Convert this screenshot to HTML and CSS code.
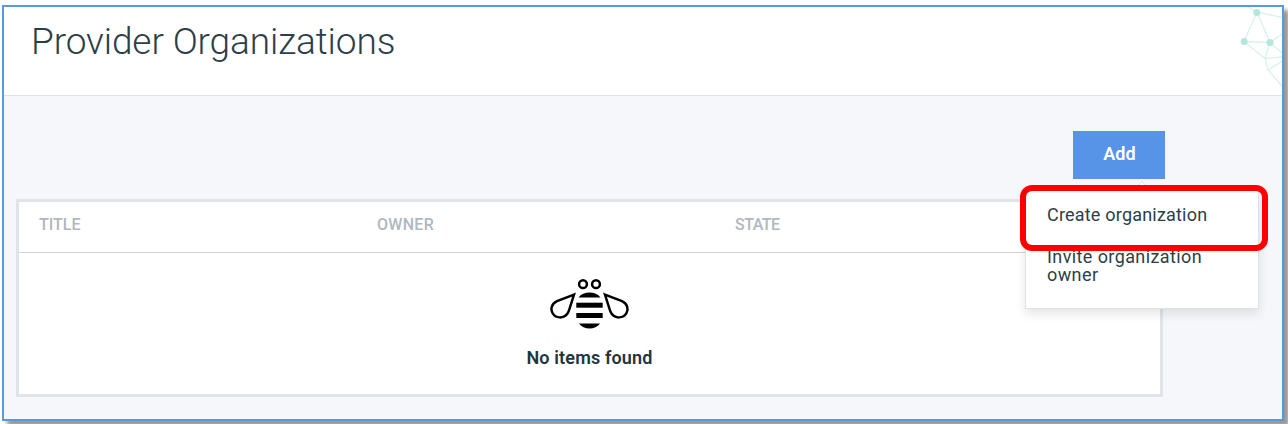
FILE: index.html
```html
<!DOCTYPE html>
<html lang="en">
<head>
<meta charset="utf-8">
<title>Provider Organizations</title>
<link rel="stylesheet" href="styles.css">
</head>
<body>
<div class="window">
  <header class="header">
    <h1 class="title">Provider Organizations</h1>
    <svg class="network" width="42" height="88" viewBox="1240 7 42 88" fill="none">
      <g stroke="#d9f2ed" stroke-width="1.3">
        <path d="M1257 12L1244 41.500M1257 12L1270 42.500M1257 12L1282 17.500M1257 12L1248 7M1244 41.500L1270 42.500L1282 34M1244 41.500L1265 58.500L1282 57M1270 42.500L1265 58.500L1268 70L1282 86M1268 70L1282 61M1270 42.500L1282 53"/>
      </g>
      <g fill="#b3e6dc"><circle cx="1256.800" cy="12.500" r="3.500"/><circle cx="1244.200" cy="41.500" r="3.500"/><circle cx="1270" cy="42.500" r="3.500"/></g>
    </svg>
  </header>
  <main class="content">
    <div class="toolbar">
      <button class="add">Add</button>
      <div class="menu">
        <div class="item">Create organization</div>
        <div class="item second">Invite organization owner</div>
      </div>
      <div class="highlight"></div>
    </div>
    <section class="table">
      <div class="head">
        <span>TITLE</span><span class="owner">OWNER</span><span class="state">STATE</span>
      </div>
      <div class="empty">
        <svg class="bee" width="80" height="52" viewBox="550 277 80 52" fill="none">
          <g stroke="#000" stroke-width="2.500">
            <circle cx="583" cy="284.200" r="3.900"/><circle cx="596" cy="284.200" r="3.900"/>
            <path d="M574 294.700L557 301.200C551.500 303.800 550.300 309 552.500 313C555.500 318.500 563.500 319 567.500 313.500C568.500 312 569 310.500 569.300 309.500Z"/>
            <path d="M605 294.700L622 301.200C627.500 303.800 628.700 309 626.500 313C623.500 318.500 615.500 319 611.500 313.500C610.500 312 610 310.500 609.700 309.500Z"/>
          </g>
          <g fill="#000"><path d="M578.500 297.500C583 290.700 596 290.700 600.500 297.500Z"/><rect x="576.300" y="302.700" width="26.400" height="5"/><rect x="576.300" y="313" width="26.400" height="5"/><path d="M579 323.500H600C595.500 330.300 583.500 330.300 579 323.500Z"/></g>
        </svg>
        <p class="message">No items found</p>
      </div>
    </section>
  </main>
</div>
</body>
</html>
```
FILE: styles.css
```css
* { box-sizing: border-box; }
body { margin: 0; height: 424px; padding: 5px 0 0 2px; overflow: hidden; background: #fff; font-family: Roboto, "Liberation Sans", sans-serif; color: #2c3e49; }
.window { width: 1282px; height: 416px; border: 2px solid #5b9bd5; background: #f5f7fb; box-shadow: 5px 5px 4px #989898; }
.header { height: 89px; display: flex; justify-content: space-between; background: #fff; border-bottom: 1px solid #dfe3e6; }
.title { margin: 0; padding: 11px 0 0 27px; font-size: 37px; line-height: 48px; font-weight: 300; letter-spacing: -.11px; }
.network { display: block; }
.content { padding: 35px 0 0 12px; }
.toolbar { position: relative; width: 1149px; height: 68px; display: flex; justify-content: flex-end; align-items: flex-start; }
.add { width: 92px; height: 48px; padding: 0 0 3px 1px; border: 0; background: #5794e8; color: #fff; font: 600 18px Roboto, sans-serif; }
.menu { position: absolute; z-index: 2; left: 1009px; top: 58px; width: 234px; height: 120px; padding: 16px 21px; background: #fff; border: 1px solid #dfe3e6; box-shadow: 0 5px 10px rgba(0,0,0,.1); font-size: 18px; line-height: 18px; letter-spacing: .2px; }
.menu::before { content: ""; position: absolute; left: 111px; top: -7px; width: 9px; height: 9px; background: #fff; border: solid #dfe3e6; border-width: 1px 0 0 1px; transform: rotate(45deg); }
.item { width: 180px; }
.second { margin-top: 24px; letter-spacing: .4px; }
.highlight { position: absolute; z-index: 3; left: 1004px; top: 54px; width: 248px; height: 66px; border: 6px solid #f00; border-radius: 12px; }
.table { width: 1147px; height: 198px; border: 3px solid #e0e4e8; background: #fff; }
.head { height: 51px; padding: 0 0 5px 20px; display: grid; grid-template-columns: 338px 358px 1fr; align-items: center; justify-items: start; border-bottom: 1px solid #d3d6d8; color: #b0b8be; font-size: 16px; font-weight: 500; }
.owner { letter-spacing: .3px; }
.state { letter-spacing: -.5px; }
.empty { display: flex; flex-direction: column; align-items: center; padding-top: 24px; }
.bee { display: block; }
.message { margin: 18px 0 0; font-size: 18px; line-height: 22px; font-weight: 600; letter-spacing: .15px; color: #203540; }
```
